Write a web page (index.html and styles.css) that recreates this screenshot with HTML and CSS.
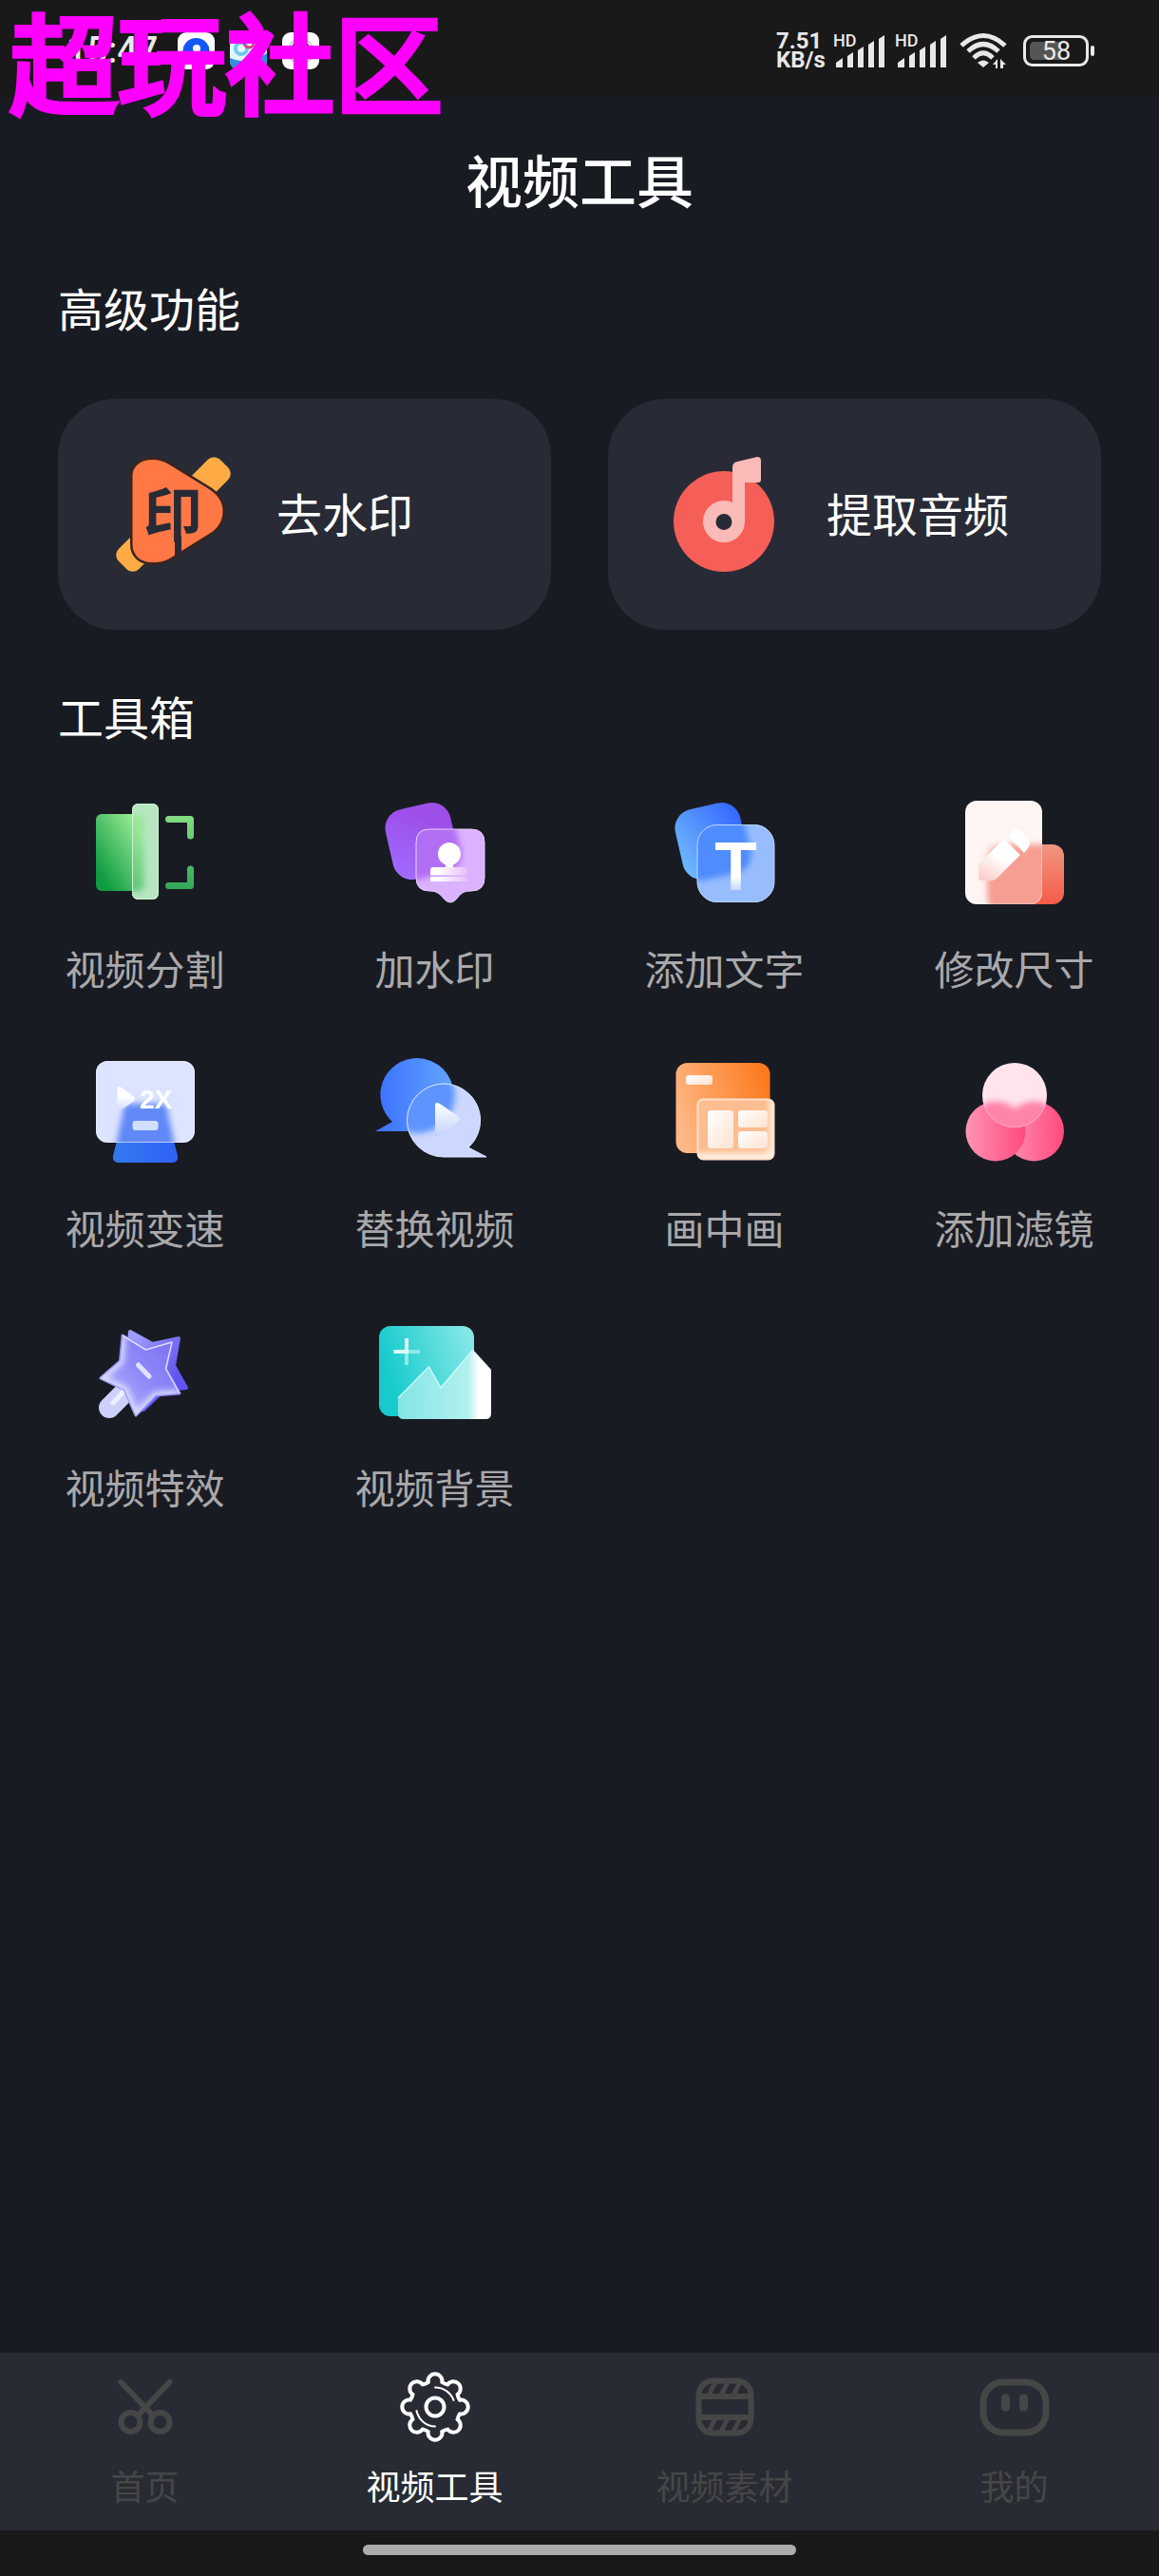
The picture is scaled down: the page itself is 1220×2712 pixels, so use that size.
FILE: index.html
```html
<!DOCTYPE html>
<html lang="zh-CN">
<head>
  <meta charset="UTF-8">
  <meta name="viewport" content="width=device-width, initial-scale=1.0">
  <title>视频工具</title>
  <link rel="stylesheet" href="styles.css">
</head>
<body>
  <div class="watermark">超玩社区</div>

  <div class="statusbar">
    <div class="status-left">
      <span class="clock">15:47</span>
      <svg class="app-icon" viewBox="0 0 39 39">
        <rect width="39" height="39" rx="9" fill="#fff"/>
        <circle cx="19.500" cy="20" r="14" fill="#1457f5"/>
        <circle cx="20" cy="17" r="4" fill="#fff"/>
      </svg>
      <svg class="app-icon" viewBox="0 0 39 39">
        <rect width="39" height="39" rx="9" fill="#e4f6fd"/>
        <path d="M0 27Q20 36 39 22V30Q39 39 30 39H9Q0 39 0 30Z" fill="#2f8fe0"/>
        <circle cx="12" cy="17" r="6" fill="none" stroke="#6fcdee" stroke-width="4"/>
        <circle cx="20" cy="11" r="5" fill="none" stroke="#d8427c" stroke-width="3"/>
        <text x="17" y="37" font-size="9" font-weight="700" fill="#fff">now</text>
      </svg>
      <svg class="app-icon" viewBox="0 0 39 39">
        <rect width="39" height="39" rx="9" fill="#fff"/>
        <circle cx="19.500" cy="20" r="13" fill="none" stroke="#ccc" stroke-width="2"/>
        <circle cx="19.500" cy="20" r="11" fill="#40409c"/>
        <path d="M15 16h10M15 23h10" stroke="#a46bd8" stroke-width="2"/>
      </svg>
    </div>
    <div class="status-right">
      <div class="net-speed"><span>7.51</span><span>KB/s</span></div>
      <svg class="signal" viewBox="0 0 54 36">
        <text x="0" y="14" font-size="18" font-weight="500">HD</text>
        <path d="M3 31l7-5v10H3zM15 24l6-4v16h-6zM26 18l6-4v22h-6zM37 12l6-4v28h-6zM48 6l6-4v34h-6z"/>
      </svg>
      <svg class="signal" viewBox="0 0 54 36">
        <text x="0" y="14" font-size="18" font-weight="500">HD</text>
        <path d="M3 31l7-5v10H3zM15 24l6-4v16h-6zM26 18l6-4v22h-6zM37 12l6-4v28h-6zM48 6l6-4v34h-6z"/>
      </svg>
      <svg class="wifi" viewBox="0 0 50 38">
        <g fill="none" stroke="#e8e8e8" stroke-width="5">
          <path d="M2 14Q25-7 48 14"/>
          <path d="M9 20Q25 5 41 20"/>
          <path d="M15 27Q25 17 35 27"/>
        </g>
        <path d="M19 32Q25 27 31 32L25 37Z"/>
        <path d="M35 34l5-6v10h-2v-4zM43 28l6 6h-3v4h-3z"/>
      </svg>
      <svg class="battery" viewBox="0 0 75 33">
        <rect x="1.500" y="1.500" width="66" height="30" rx="8" fill="none" stroke="#e8e8e8" stroke-width="3"/>
        <path d="M12 7H40V26H12Q7 26 7 21V12Q7 7 12 7Z" fill="#555"/>
        <rect x="71" y="11" width="4" height="11" rx="2"/>
        <text x="35" y="26" font-size="27" text-anchor="middle">58</text>
      </svg>
    </div>
  </div>

  <header class="header">
    <h1>视频工具</h1>
  </header>

  <main class="content">
    <h2>高级功能</h2>
    <div class="cards">
      <button class="card" type="button">
        <svg class="card-icon" viewBox="0 0 121 121">
          <rect x="-15" y="45.500" width="151" height="30" rx="9" transform="rotate(-45 60.500 60.500)" fill="#ffab45"/>
          <path d="M17.500 20C17.500 9 27 3 38 3C46 3 51 5 56 8L95 32C107 39 112.500 47 112.500 57C112.500 67 108 75 98 81L58 106C50 111 44 111 38 111C25 111 17.500 103 17.500 92Z" fill="#ff7845" stroke="#3a241c" stroke-width="5" paint-order="stroke"/>
          <text x="60" y="84" font-size="62" font-weight="700" text-anchor="middle" fill="#282b35">印</text>
          <path d="M62 84H69V101L62 105Z" fill="#282b35"/>
        </svg>
        <span>去水印</span>
      </button>
      <button class="card" type="button">
        <svg class="card-icon" viewBox="0 0 121 121">
          <circle cx="61" cy="68" r="53" fill="#f55f57"/>
          <path d="M70 11Q70 6 75 5L96 0Q100 0 100 4V24Q100 27 97 27H83V68A22 22 0 1 1 70 48Z" fill="#f9bab8"/>
          <circle cx="61" cy="68.500" r="8.500" fill="#282b35"/>
        </svg>
        <span>提取音频</span>
      </button>
    </div>

    <h2>工具箱</h2>
    <div class="tools">
      <button class="tool" type="button">
        <svg viewBox="0 0 120 120">
          <defs>
            <linearGradient id="green" x1="1" y1="0" x2="0" y2="1">
              <stop offset="0.150" stop-color="#93e891"/><stop offset="0.850" stop-color="#109c42"/>
            </linearGradient>
            <linearGradient id="bracket" gradientUnits="userSpaceOnUse" x1="0" y1="20" x2="0" y2="98">
              <stop offset="0" stop-color="#84dd80"/><stop offset="1" stop-color="#33a85a"/>
            </linearGradient>
            <clipPath id="splitBar"><rect x="46" y="8" width="28" height="101" rx="6"/></clipPath>
            <filter id="soft" x="-30%" y="-30%" width="160%" height="160%"><feGaussianBlur stdDeviation="3"/></filter>
          </defs>
          <rect x="8" y="19" width="50" height="81" rx="6" fill="url(#green)"/>
          <rect x="46" y="8" width="28" height="101" rx="6" fill="#b8e6c2"/>
          <g clip-path="url(#splitBar)">
            <rect x="8" y="19" width="51" height="81" rx="6" fill="url(#green)" opacity="0.750" filter="url(#soft)"/>
          </g>
          <rect x="46.500" y="8.500" width="27" height="100" rx="6" fill="none" stroke="#cdf1d2"/>
          <path d="M84.500 24.500H107.500V42M107.500 77V94.500H84.500" fill="none" stroke="url(#bracket)" stroke-width="7" stroke-linecap="round" stroke-linejoin="round"/>
        </svg>
        <span>视频分割</span>
      </button>

      <button class="tool" type="button">
        <svg viewBox="0 0 120 120">
          <defs>
            <linearGradient id="violet" x1="0.800" y1="0" x2="0.200" y2="1">
              <stop offset="0.200" stop-color="#9d4fe8"/><stop offset="1" stop-color="#a06bff"/>
            </linearGradient>
            <linearGradient id="stamp" x1="0" y1="0" x2="1" y2="0">
              <stop offset="0.200" stop-color="#fff"/><stop offset="1" stop-color="#e6bdf8"/>
            </linearGradient>
            <clipPath id="bubble"><path d="M54 35H98Q112 35 112 49V86Q112 100 98 100C89 100 87 103 82 109Q76 115 70 109C65 103 62 100 54 100Q40 100 40 86V49Q40 35 54 35Z"/></clipPath>
          </defs>
          <rect x="11" y="10" width="70" height="75" rx="20" transform="rotate(-13 46 47.500)" fill="url(#violet)"/>
          <path d="M54 35H98Q112 35 112 49V86Q112 100 98 100C89 100 87 103 82 109Q76 115 70 109C65 103 62 100 54 100Q40 100 40 86V49Q40 35 54 35Z" fill="#dab2fd"/>
          <g clip-path="url(#bubble)">
            <rect x="11" y="10" width="73" height="76" rx="20" transform="rotate(-13 46 47.500)" fill="#b16ef5" filter="url(#soft)"/>
          </g>
          <path d="M54 35H98Q112 35 112 49V86Q112 100 98 100C89 100 87 103 82 109Q76 115 70 109C65 103 62 100 54 100Q40 100 40 86V49Q40 35 54 35Z" fill="none" stroke="#eacfff"/>
          <circle cx="75" cy="61" r="12" fill="#fff"/>
          <path d="M71 70H79V76H71Z" fill="#fff"/>
          <path d="M58 75H91Q94 75 94 78V83.500H55V78Q55 75 58 75ZM55 85H94V90H55Z" fill="url(#stamp)"/>
        </svg>
        <span>加水印</span>
      </button>

      <button class="tool" type="button">
        <svg viewBox="0 0 120 120">
          <defs>
            <linearGradient id="blue" x1="0" y1="0.700" x2="1" y2="0.200">
              <stop offset="0" stop-color="#6db5ff"/><stop offset="1" stop-color="#3468ff"/>
            </linearGradient>
            <linearGradient id="letter" x1="0" y1="0" x2="0" y2="1">
              <stop offset="0.650" stop-color="#fff"/><stop offset="0.850" stop-color="#b9cffd"/>
            </linearGradient>
            <clipPath id="textTile"><rect x="31" y="30" width="81" height="82" rx="21"/></clipPath>
          </defs>
          <rect x="11" y="10" width="70" height="75" rx="20" transform="rotate(-13 46 47.500)" fill="url(#blue)"/>
          <rect x="31" y="30" width="81" height="82" rx="21" fill="#97bdff"/>
          <g clip-path="url(#textTile)">
            <rect x="11" y="10" width="73" height="76" rx="20" transform="rotate(-13 46 47.500)" fill="#508cff" filter="url(#soft)"/>
          </g>
          <rect x="31" y="30.500" width="81" height="81" rx="21" fill="none" stroke="#b7d5ff"/>
          <text x="71.500" y="99" font-size="73" font-weight="700" text-anchor="middle" class="latin" fill="url(#letter)">T</text>
        </svg>
        <span>添加文字</span>
      </button>

      <button class="tool" type="button">
        <svg viewBox="0 0 120 120">
          <defs>
            <linearGradient id="red" x1="0" y1="0" x2="0" y2="1">
              <stop offset="0" stop-color="#ee9782"/><stop offset="1" stop-color="#f65c48"/>
            </linearGradient>
            <linearGradient id="pencil" x1="0.800" y1="0" x2="0.200" y2="1">
              <stop offset="0.450" stop-color="#fff"/><stop offset="1" stop-color="#fbd0cb"/>
            </linearGradient>
            <clipPath id="page"><rect x="8" y="5" width="81" height="109" rx="12"/></clipPath>
          </defs>
          <rect x="30" y="51" width="82" height="63" rx="12" fill="url(#red)"/>
          <rect x="8" y="5" width="81" height="109" rx="12" fill="#fff5f3"/>
          <g clip-path="url(#page)">
            <path d="M31 70Q31 51 50 51H110V130H42Q31 120 31 100Z" fill="#f69e92" filter="url(#soft)"/>
          </g>
          <rect x="8.500" y="5.500" width="80" height="108" rx="12" fill="none" stroke="#fff" opacity="0.300"/>
          <path d="M22 72L48.500 45L66 62L41 87Q39 89 36 89H24Q22 89 22 87Z" fill="url(#pencil)"/>
          <path d="M53 42L58 37Q62 33 66 37L74 45Q78 49 74 55L70 60Z" fill="#fff"/>
        </svg>
        <span>修改尺寸</span>
      </button>

      <button class="tool" type="button">
        <svg viewBox="0 0 120 120">
          <defs>
            <linearGradient id="stand" x1="0" y1="0" x2="1" y2="0">
              <stop offset="0" stop-color="#3479ef"/><stop offset="1" stop-color="#2f61f6"/>
            </linearGradient>
            <linearGradient id="fade" x1="0" y1="0" x2="0" y2="1">
              <stop offset="0.400" stop-color="#fff"/><stop offset="1" stop-color="#cfdcfd"/>
            </linearGradient>
            <clipPath id="screen"><rect x="8" y="6" width="104" height="86" rx="12"/></clipPath>
          </defs>
          <path d="M40 51H80L94 106Q95 113 88 113H32Q25 113 26 106Z" fill="url(#stand)"/>
          <rect x="8" y="6" width="104" height="86" rx="12" fill="#dde4ff"/>
          <g clip-path="url(#screen)">
            <path d="M42 51H78Q82 51 83 56L94 110H26L37 56Q38 51 42 51Z" fill="#6288f7" filter="url(#soft)"/>
          </g>
          <rect x="8.500" y="6.500" width="103" height="85" rx="12" fill="none" stroke="#f2f4ff" opacity="0.600"/>
          <path d="M30.500 35Q31 32 35 34L47 43Q51 46 47 49L35 57Q31 59 30.500 56Z" fill="url(#fade)"/>
          <text x="54" y="56" font-size="28" font-weight="700" class="latin" fill="#fff">2X</text>
          <rect x="46.500" y="69" width="27" height="10" rx="3" fill="#cfdffd"/>
        </svg>
        <span>视频变速</span>
      </button>

      <button class="tool" type="button">
        <svg viewBox="0 0 120 120">
          <defs>
            <linearGradient id="chat" x1="0" y1="0" x2="1" y2="0">
              <stop offset="0.100" stop-color="#3e75ff"/><stop offset="1" stop-color="#62a5ff"/>
            </linearGradient>
            <linearGradient id="playFade" x1="0" y1="0" x2="0" y2="1">
              <stop offset="0" stop-color="#fff"/><stop offset="1" stop-color="#c3d2fd"/>
            </linearGradient>
            <clipPath id="chatFront"><path d="M69 30A38.500 38.500 0 0 1 95 97L114 107H69A38.500 38.500 0 0 1 69 30Z"/></clipPath>
          </defs>
          <path d="M41 3A38.500 38.500 0 1 1 41 80H-3L15 70A38.500 38.500 0 0 1 41 3Z" fill="url(#chat)"/>
          <path d="M69 30A38.500 38.500 0 0 1 95 97L114 107H69A38.500 38.500 0 0 1 69 30Z" fill="#ccd8ff"/>
          <g clip-path="url(#chatFront)">
            <circle cx="41" cy="42" r="40" fill="#5d94ff" filter="url(#soft)"/>
          </g>
          <path d="M69 30A38.500 38.500 0 0 1 95 97L114 107H69A38.500 38.500 0 0 1 69 30Z" fill="none" stroke="#e0e9ff"/>
          <path d="M60 53Q60 48 65 51L84 64Q88 67 84 71L65 84Q60 87 60 82Z" fill="url(#playFade)"/>
        </svg>
        <span>替换视频</span>
      </button>

      <button class="tool" type="button">
        <svg viewBox="0 0 120 120">
          <defs>
            <linearGradient id="orange" x1="0" y1="0.600" x2="1" y2="0.300">
              <stop offset="0" stop-color="#ffb886"/><stop offset="1" stop-color="#fc7a1e"/>
            </linearGradient>
            <linearGradient id="cream" x1="0" y1="0" x2="1" y2="1">
              <stop offset="0" stop-color="#fff"/><stop offset="1" stop-color="#fee2d0"/>
            </linearGradient>
            <clipPath id="pipFront"><rect x="31" y="46" width="81" height="64" rx="6"/></clipPath>
          </defs>
          <rect x="8.500" y="8" width="99" height="95" rx="12" fill="url(#orange)"/>
          <rect x="19" y="21" width="28" height="10" rx="3" fill="url(#cream)"/>
          <rect x="31" y="46" width="81" height="64" rx="6" fill="#fff0e4"/>
          <g clip-path="url(#pipFront)">
            <rect x="20" y="30" width="87" height="73" rx="8" fill="#fcbd90" filter="url(#soft)"/>
          </g>
          <rect x="31.500" y="46.500" width="80" height="63" rx="6" fill="none" stroke="#ffe1cb" stroke-width="2"/>
          <rect x="42" y="58" width="27" height="40" rx="3" fill="url(#cream)"/>
          <rect x="74" y="58" width="31" height="18" rx="3" fill="url(#cream)"/>
          <rect x="74" y="80" width="31" height="18" rx="3" fill="url(#cream)"/>
        </svg>
        <span>画中画</span>
      </button>

      <button class="tool" type="button">
        <svg viewBox="0 0 120 120">
          <defs>
            <linearGradient id="pink" x1="0" y1="0" x2="1" y2="0">
              <stop offset="0" stop-color="#ff93b4"/><stop offset="1" stop-color="#ff4a7d"/>
            </linearGradient>
            <clipPath id="lens"><circle cx="60" cy="42" r="34"/></clipPath>
          </defs>
          <circle cx="80.500" cy="80" r="31.500" fill="url(#pink)"/>
          <circle cx="40" cy="80" r="31.500" fill="url(#pink)"/>
          <circle cx="60" cy="42" r="34" fill="#ffe5eb"/>
          <g clip-path="url(#lens)">
            <g filter="url(#soft)">
              <circle cx="80.500" cy="80" r="31.500" fill="#ff84aa"/>
              <circle cx="40" cy="80" r="31.500" fill="#ff84aa"/>
            </g>
          </g>
          <circle cx="60" cy="42" r="33.500" fill="none" stroke="#fff" opacity="0.200"/>
        </svg>
        <span>添加滤镜</span>
      </button>

      <button class="tool" type="button">
        <svg viewBox="0 0 120 120">
          <defs>
            <linearGradient id="starBack" x1="0" y1="0" x2="1" y2="1">
              <stop offset="0.100" stop-color="#9f9cfb"/><stop offset="0.700" stop-color="#6055ee"/>
            </linearGradient>
            <linearGradient id="star" x1="0" y1="0.900" x2="0.900" y2="0.100">
              <stop offset="0" stop-color="#b5b6fd"/><stop offset="0.500" stop-color="#918df9"/><stop offset="1" stop-color="#7c72f4"/>
            </linearGradient>
            <clipPath id="starShape"><path d="M36 22L60.500 37L88 29L81.500 57L96 83L71 85L50 106L38 79L13 67L33.500 49Z"/></clipPath>
          </defs>
          <path d="M36 84L22 98" stroke="#cdd0fb" stroke-width="22" stroke-linecap="round"/>
          <path d="M38 80L26 93" stroke="#eef0ff" stroke-width="5" stroke-linecap="round"/>
          <path d="M44 18L67.500 31L95 25L90 54L103 77L79 80L58 100L45 75L41 44Z" fill="url(#starBack)" stroke="url(#starBack)" stroke-width="4" stroke-linejoin="round"/>
          <path d="M36 22L60.500 37L88 29L81.500 57L96 83L71 85L50 106L38 79L13 67L33.500 49Z" fill="url(#star)" stroke="url(#star)" stroke-width="3" stroke-linejoin="round"/>
          <g clip-path="url(#starShape)">
            <path d="M96 83L71 85L50 106L38 79L13 67L33.500 49L36 22" fill="none" stroke="#dadcff" stroke-width="8" filter="url(#soft)"/>
          </g>
          <path d="M36 22L60.500 37L88 29L81.500 57L96 83" fill="none" stroke="#dfdcff" stroke-width="1.500" stroke-linejoin="round"/>
          <path d="M52.500 53L64 65" stroke="#e2e2ff" stroke-width="5" stroke-linecap="round"/>
        </svg>
        <span>视频特效</span>
      </button>

      <button class="tool" type="button">
        <svg viewBox="0 0 120 120">
          <defs>
            <linearGradient id="teal" x1="0" y1="0.600" x2="1" y2="0.300">
              <stop offset="0.100" stop-color="#17cbcc"/><stop offset="1" stop-color="#84e7e7"/>
            </linearGradient>
            <linearGradient id="hill" x1="0" y1="0" x2="1" y2="0">
              <stop offset="0" stop-color="#83e5e5"/><stop offset="0.750" stop-color="#b3f0ee"/><stop offset="0.870" stop-color="#fff"/>
            </linearGradient>
          </defs>
          <rect x="1" y="12" width="100" height="95" rx="12" fill="url(#teal)"/>
          <path d="M30 25V53M16.500 39H44" stroke="#8ee9e8" stroke-width="4"/>
          <path d="M30 25V39H16.500" fill="none" stroke="#d8fbfa" stroke-width="4"/>
          <path d="M21 88L53.500 55L66 77L100 37L119 58V104Q119 110 113 110H27Q21 110 21 104Z" fill="url(#hill)"/>
          <path d="M21 88L53.500 55L66 77L100 37" fill="none" stroke="#c9fbfa" stroke-width="1.500"/>
        </svg>
        <span>视频背景</span>
      </button>
    </div>
  </main>

  <nav class="tabbar">
    <a class="tab" href="#home">
      <svg viewBox="0 0 74 74">
        <g fill="none" stroke="currentColor" stroke-width="6" stroke-linecap="round">
          <path d="M11.500 11L45 46M62.500 11L29 46"/>
          <circle cx="21.500" cy="53" r="10"/>
          <circle cx="52.500" cy="53" r="10"/>
        </g>
      </svg>
      <span>首页</span>
    </a>
    <a class="tab active" href="#tools">
      <svg viewBox="0 0 74 74">
        <defs>
          <path id="tooth" d="M-7.400-26A7.500 7.500 0 1 1 7.400-26Q9.900-24.200 13.100-23.600"/>
        </defs>
        <g transform="translate(37 37)" fill="none" stroke="currentColor" stroke-width="4" stroke-linecap="round">
          <use href="#tooth"/>
          <use href="#tooth" transform="rotate(45)"/>
          <use href="#tooth" transform="rotate(90)"/>
          <use href="#tooth" transform="rotate(135)"/>
          <use href="#tooth" transform="rotate(180)"/>
          <use href="#tooth" transform="rotate(225)"/>
          <use href="#tooth" transform="rotate(270)"/>
          <use href="#tooth" transform="rotate(315)"/>
          <circle r="9.500"/>
          <path d="M0-20.500A20.500 20.500 0 0 1 19.500-7M0 20.500A20.500 20.500 0 0 1-19.500 4" stroke-width="2"/>
        </g>
      </svg>
      <span>视频工具</span>
    </a>
    <a class="tab" href="#material">
      <svg viewBox="0 0 74 74">
        <g fill="none" stroke="currentColor" stroke-width="6">
          <rect x="9.500" y="9.500" width="55" height="55" rx="15"/>
          <path d="M9.500 26H64.500M9.500 48H64.500"/>
          <path d="M27 11L20 25M40 11L33 25M53 11L46 25M27 49L20 63M40 49L33 63M53 49L46 63" stroke-width="5"/>
        </g>
      </svg>
      <span>视频素材</span>
    </a>
    <a class="tab" href="#mine">
      <svg viewBox="0 0 74 74">
        <rect x="4" y="11" width="66" height="53" rx="21" fill="none" stroke="currentColor" stroke-width="7"/>
        <rect x="23" y="23.500" width="9" height="18" rx="4" fill="currentColor"/>
        <rect x="42" y="23.500" width="9" height="18" rx="4" fill="currentColor"/>
      </svg>
      <span>我的</span>
    </a>
  </nav>

  <div class="gesture"><div class="gesture-pill"></div></div>
</body>
</html>
```

FILE: styles.css
```css
* {
  box-sizing: border-box;
}
body {
  margin: 0;
  min-height: 100vh;
  display: flex;
  flex-direction: column;
  background: #191b23;
  color: #fff;
  font-family: "Noto Sans CJK SC", sans-serif;
}
svg {
  display: block;
  flex: none;
  overflow: visible;
}
button {
  border: none;
  padding: 0;
  background: none;
  color: inherit;
  font-family: inherit;
  cursor: pointer;
}
.latin {
  font-family: "Liberation Sans", sans-serif;
}

/* floating brand mark over the status bar */
.watermark {
  position: absolute;
  top: 0;
  left: 10px;
  font-size: 114px;
  line-height: 124px;
  font-weight: 400;
  color: #f0f;
  -webkit-text-stroke: 6px #f0f;
  pointer-events: none;
}

/* status bar */
.statusbar {
  height: 102px;
  padding: 4px 68px 0 70px;
  display: flex;
  align-items: center;
  justify-content: space-between;
  background: #191919;
  color: #e8e8e8;
  fill: #e8e8e8;
  font-family: Roboto, sans-serif;
}
.status-left {
  display: flex;
  align-items: center;
  gap: 16px;
}
.clock {
  width: 101px;
  font-size: 38px;
  font-weight: 500;
}
.app-icon {
  width: 39px;
  height: 39px;
}
.status-right {
  display: flex;
  align-items: center;
}
.net-speed {
  width: 60px;
  display: flex;
  flex-direction: column;
  font-size: 24px;
  line-height: 20px;
  font-weight: 700;
}
.signal {
  width: 54px;
  height: 36px;
  margin-right: 11px;
}
.wifi {
  width: 50px;
  height: 38px;
  margin: 0 17px 0 3px;
}
.battery {
  width: 75px;
  height: 33px;
}

/* page */
.header {
  height: 180px;
  padding-bottom: 8px;
  display: flex;
  align-items: center;
  justify-content: center;
}
h1 {
  margin: 0;
  font-size: 60px;
  line-height: 72px;
  font-weight: 500;
}
.content {
  flex: 1;
  padding-top: 17px;
}
h2 {
  margin: 0 61px;
  font-size: 48px;
  line-height: 48px;
  font-weight: 400;
}
.cards {
  display: grid;
  grid-template-columns: 1fr 1fr;
  gap: 60px;
  padding: 73px 61px 66px;
}
.card {
  height: 243px;
  padding: 0 61px;
  display: flex;
  align-items: center;
  gap: 48px;
  border-radius: 60px;
  background: #282b35;
  font-size: 48px;
  line-height: 48px;
}
.card span {
  padding-bottom: 6px;
}
.card-icon {
  width: 121px;
  height: 121px;
}
.tools {
  display: grid;
  grid-template-columns: repeat(4, 1fr);
  row-gap: 68px;
  padding-top: 61px;
}
.tool {
  display: flex;
  flex-direction: column;
  align-items: center;
  gap: 37px;
  font-size: 42px;
  line-height: 48px;
  color: #a9a9ab;
}
.tool svg {
  width: 120px;
  height: 120px;
}

/* bottom navigation */
.tabbar {
  height: 187px;
  display: grid;
  grid-template-columns: repeat(4, 1fr);
  background: #282b33;
}
.tab {
  padding-top: 20px;
  display: flex;
  flex-direction: column;
  align-items: center;
  gap: 21px;
  font-size: 36px;
  line-height: 48px;
  color: #464646;
  text-decoration: none;
}
.tab svg {
  width: 74px;
  height: 74px;
}
.tab.active {
  color: #fff;
}
.gesture {
  height: 48px;
  padding-top: 15px;
  background: #191919;
}
.gesture-pill {
  width: 456px;
  height: 11px;
  margin: 0 auto;
  border-radius: 6px;
  background: #acacac;
}
```
